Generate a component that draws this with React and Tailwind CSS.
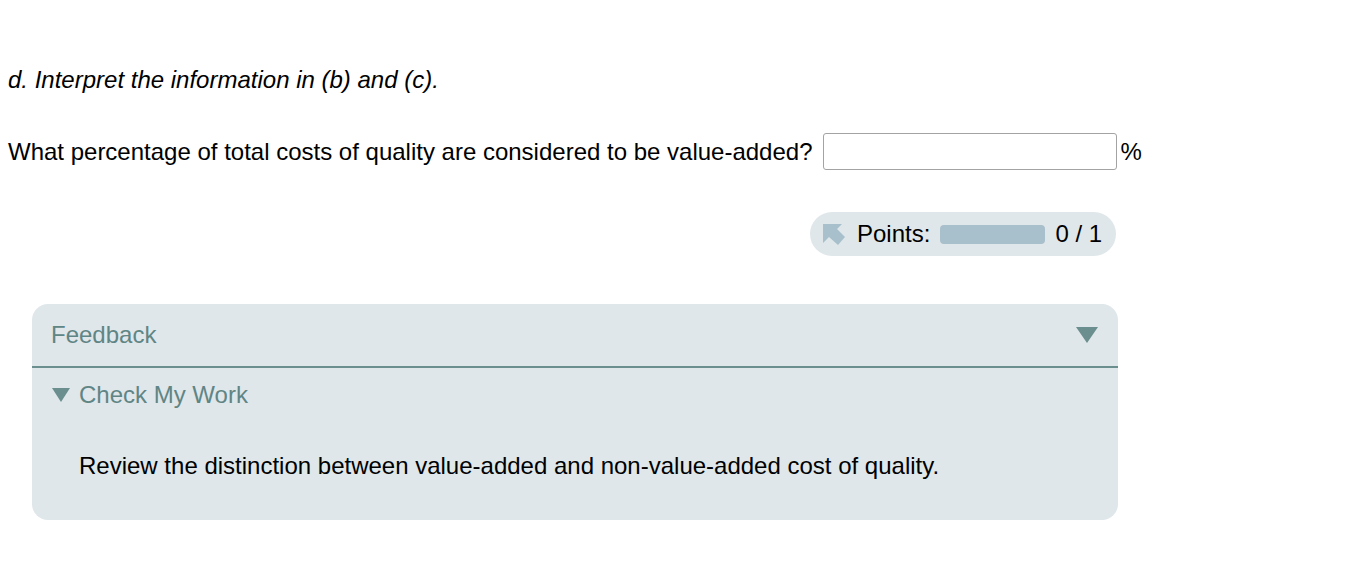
import React from 'react';

// Small arrow icon next to "Points:"
const PointsIcon = () => (
  <svg width="22" height="21" viewBox="0 0 22 21" className="shrink-0">
    <polygon points="0,0 19,0 14,5 22,13 15,21 6,13 0,19" fill="#a8c0cc" />
  </svg>
);

const Triangle = ({ className }) => (
  <svg width="22" height="16" viewBox="0 0 22 16" className={className}>
    <polygon points="0,0 22,0 11,16" fill="#6b8e8e" />
  </svg>
);

const App = () => {
  return (
    <div
      className="w-[1360px] h-[578px] bg-white text-black"
      style={{ fontFamily: '"Liberation Sans", Arial, sans-serif' }}
    >
      <div className="pl-[8px] pt-[66px]">
        <p className="italic text-[24px] leading-[28px]">
          d. Interpret the information in (b) and (c).
        </p>

        <div className="flex items-center mt-[39px]">
          <span className="text-[24px] leading-[28px]">
            What percentage of total costs of quality are considered to be value-added?
          </span>
          <input
            type="text"
            className="ml-[10px] w-[294px] h-[37px] border border-[#a3a3a3] rounded-[3px] bg-white outline-none"
          />
          <span className="ml-[4px] text-[24px] leading-[28px]">%</span>
        </div>

        <div className="flex justify-start mt-[42px] pl-[802px]">
          <div className="flex items-center whitespace-nowrap h-[44px] w-[306px] rounded-full bg-[#dfe7ea] pl-[13px]">
            <PointsIcon />
            <span className="ml-[12px] shrink-0 text-[24px] leading-[28px]">Points:</span>
            <div className="ml-[10px] shrink-0 w-[105px] h-[19px] rounded-[4px] bg-[#a8bfcc]" />
            <span className="ml-[10px] shrink-0 text-[24px] leading-[28px]">0 / 1</span>
          </div>
        </div>

        <div className="mt-[48px] ml-[24px] w-[1086px] rounded-[16px] bg-[#dfe7ea] pb-[40px]">
          <div className="flex items-center justify-between h-[64px] pl-[19px] pr-[20px] border-b-2 border-[#6b8e8e]">
            <span className="text-[24px] leading-[28px] text-[#5f8585]">Feedback</span>
            <Triangle />
          </div>
          <div className="flex items-center pl-[20px] pt-[13px]">
            <svg width="18" height="14" viewBox="0 0 18 14">
              <polygon points="0,0 18,0 9,14" fill="#6b8e8e" />
            </svg>
            <span className="ml-[9px] text-[24px] leading-[28px] text-[#5f8585]">Check My Work</span>
          </div>
          <p className="pl-[47px] mt-[43px] text-[24px] leading-[28px]">
            Review the distinction between value-added and non-value-added cost of quality.
          </p>
        </div>
      </div>
    </div>
  );
};

export default App;
